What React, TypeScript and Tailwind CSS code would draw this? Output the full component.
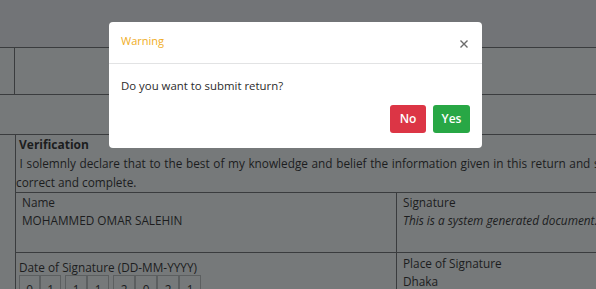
import React from "react";

const font = { fontFamily: '"Open Sans", "Noto Sans", Arial, sans-serif' };

export default function App() {
  return (
    <div
      className="relative w-[596px] h-[289px] overflow-hidden bg-[#76797a] text-[#1c1d1e]"
      style={font}
    >
      {/* Page behind the backdrop */}
      <div className="h-[48px] bg-[#727477] border-b border-[#3a3c3e]" />
      <div className="flex h-[47px] border-b border-[#3a3c3e]">
        <div className="w-[15px] border-r border-[#3a3c3e]" />
        <div className="flex-1" />
      </div>
      <div className="h-[40px] border-b border-[#3a3c3e]" />
      <div className="ml-[15px] w-[720px] border-l border-[#3a3c3e]">
        <div className="pl-[3px] pt-[1px] text-[12px] font-bold leading-[18px]">Verification</div>
        <div className="text-[11.8px] leading-[19px] w-[652px]">
          <div className="text-justify [text-align-last:justify]">
            &nbsp;I solemnly declare that to the best of my knowledge and belief the information given in this return and statements is
          </div>
          <div>correct and complete.</div>
        </div>
        <div className="flex border-t border-[#3a3c3e] h-[60px]">
          <div className="w-[381px] border-r border-[#3a3c3e] pl-[6px] text-[11.8px] leading-[18px]">
            <div>Name</div>
            <div>MOHAMMED OMAR SALEHIN</div>
          </div>
          <div className="flex-1 pl-[6px] text-[11.8px] leading-[18px]">
            <div>Signature</div>
            <div className="italic">This is a system generated document.</div>
          </div>
        </div>
        <div className="flex border-t border-[#3a3c3e] h-[60px]">
          <div className="w-[381px] border-r border-[#3a3c3e] pl-[3px] pt-[5px] text-[11.8px] leading-[18px]">
            <div>Date of Signature (DD-MM-YYYY)</div>
            <div className="flex gap-[4px] -mt-[1px]">
              <div className="flex">
                {["0", "1"].map((d, i) => (
                  <div key={i} className="w-[21px] h-[24px] border border-[#5c5f60] flex justify-center pt-[4px]">{d}</div>
                ))}
              </div>
              <div className="flex">
                {["1", "1"].map((d, i) => (
                  <div key={i} className="w-[22px] h-[24px] border border-[#5c5f60] flex justify-center pt-[4px]">{d}</div>
                ))}
              </div>
              <div className="flex">
                {["2", "0", "2", "1"].map((d, i) => (
                  <div key={i} className="w-[22px] h-[24px] border border-[#5c5f60] flex justify-center pt-[4px]">{d}</div>
                ))}
              </div>
            </div>
          </div>
          <div className="flex-1 pl-[6px] pt-[1px] text-[11.8px] leading-[18px]">
            <div>Place of Signature</div>
            <div>Dhaka</div>
          </div>
        </div>
      </div>

      {/* Modal */}
      <div className="absolute left-[109px] top-[22px] w-[373px] h-[126px] bg-white rounded-[4px] flex flex-col">
        <div className="h-[42px] border-b border-[#e2e3e4] flex items-center justify-between pl-[12px] pr-[13px]">
          <span className="text-[11px] text-[#f0ad24] mt-[-3px]">Warning</span>
          <svg width="10" height="10" viewBox="0 0 10 10" className="mt-[3px]">
            <path d="M1.5 1.5 L8.5 8.5 M8.5 1.5 L1.5 8.5" stroke="#6b6b6b" strokeWidth="1.4" />
          </svg>
        </div>
        <div className="px-[12px] pt-[14px] text-[11.4px] text-[#2b2b2b] leading-[16px]">
          Do you want to submit return?
        </div>
        <div className="flex justify-end gap-[7px] pr-[12px] mt-[11px]">
          <button className="w-[36px] h-[28px] rounded-[3px] bg-[#dc3545] text-white text-[12px] font-semibold flex items-center justify-center">
            No
          </button>
          <button className="w-[37px] h-[28px] rounded-[3px] bg-[#28a745] text-white text-[12px] font-semibold flex items-center justify-center">
            Yes
          </button>
        </div>
      </div>
    </div>
  );
}
